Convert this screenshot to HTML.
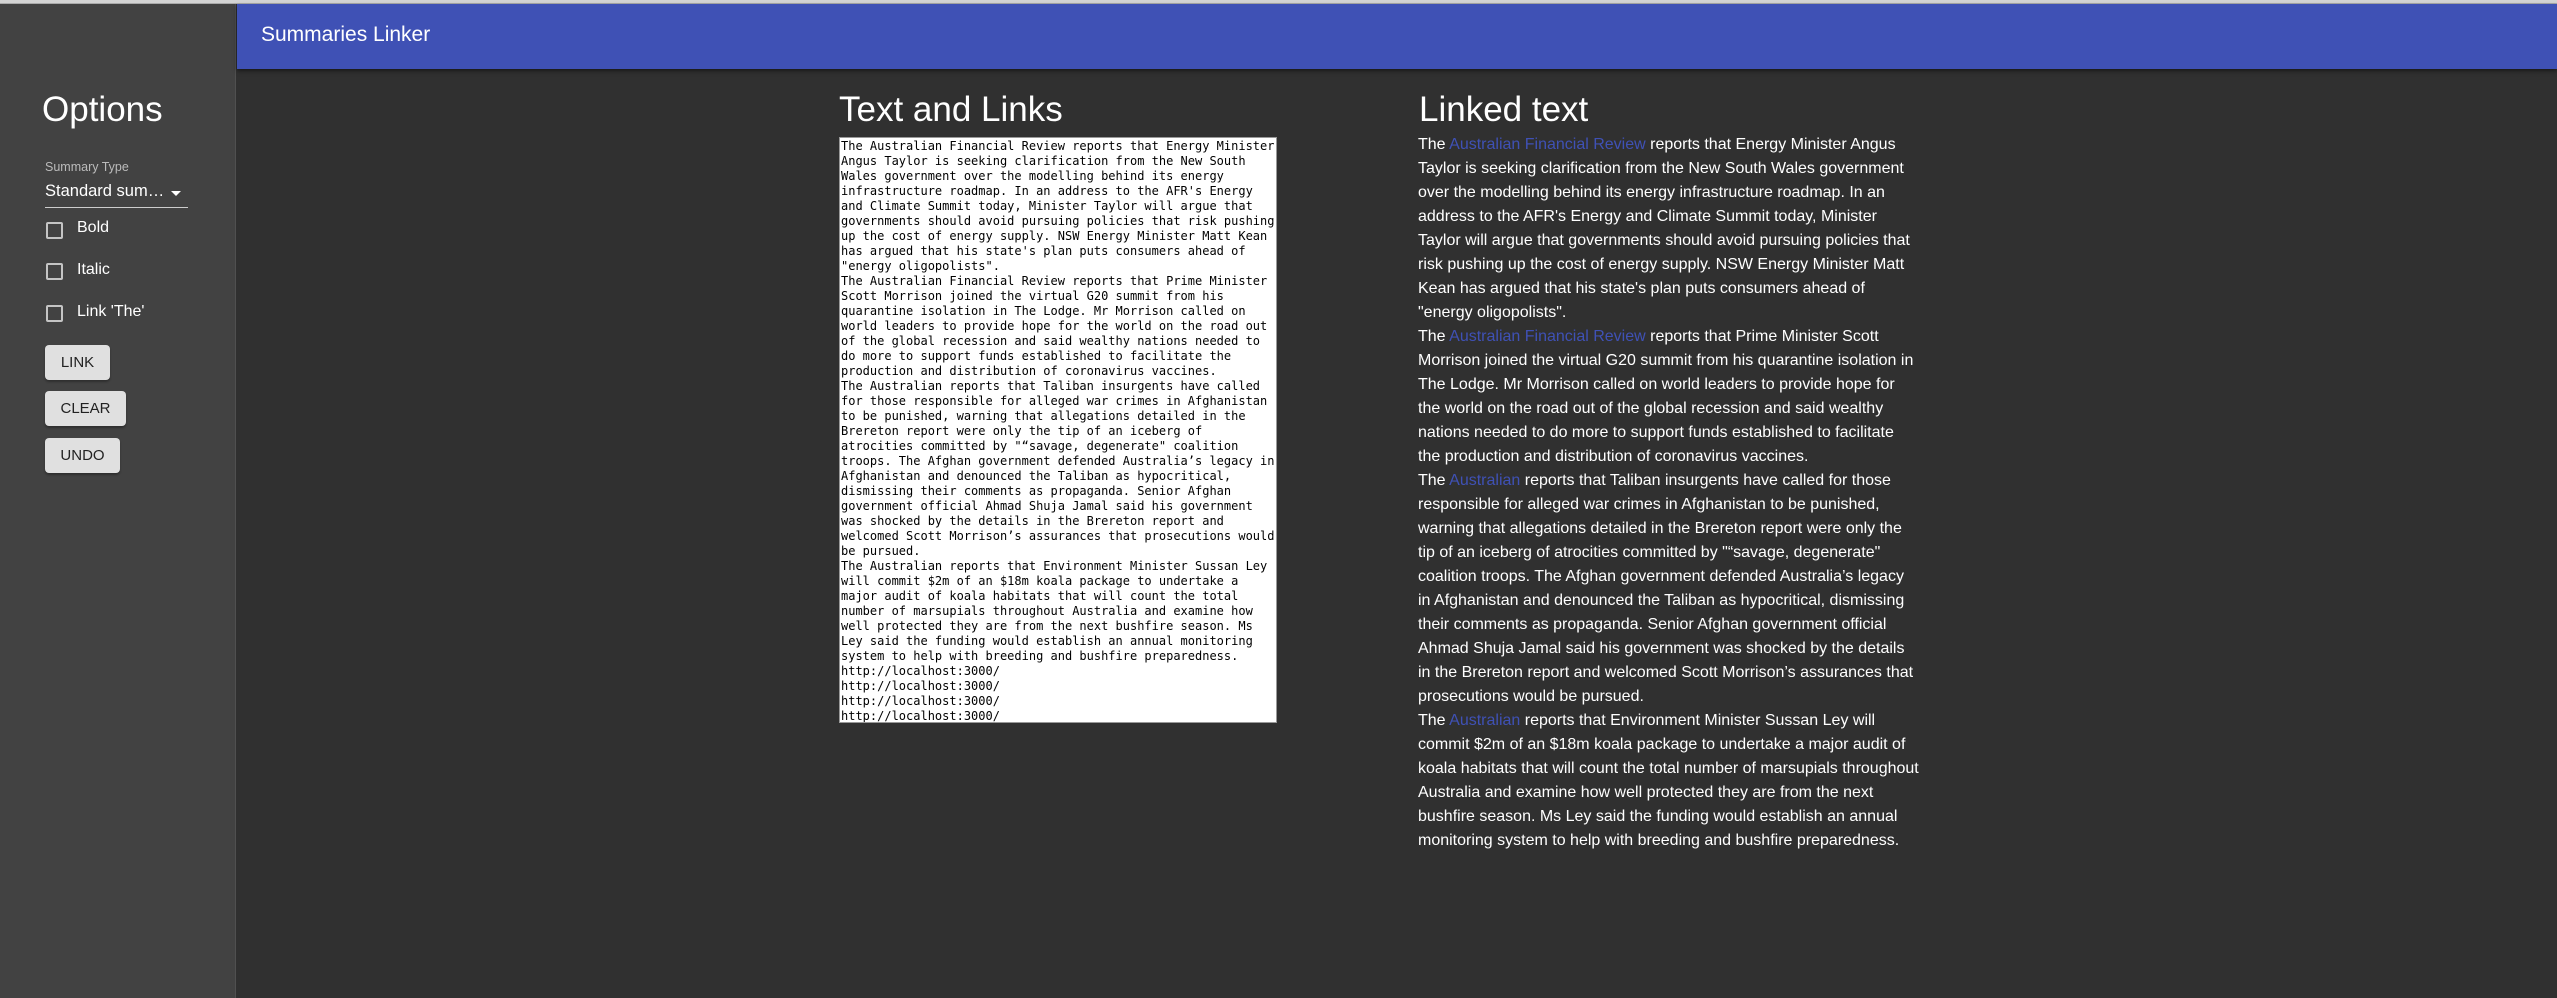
<!DOCTYPE html>
<html><head><meta charset="utf-8"><style>
*{margin:0;padding:0;box-sizing:border-box}
html,body{width:2557px;height:998px;overflow:hidden;background:#303030;font-family:"Liberation Sans",Arial,sans-serif;color:#fff}
.top{position:absolute;left:0;top:0;width:2557px;height:4px;background:#d4d4d4;border-bottom:1px solid #aaa}
.side{position:absolute;left:0;top:4px;width:236px;height:994px;background:#424242;border-right:1px solid #505050}
.hdr{position:absolute;left:237px;top:4px;width:2320px;height:65px;background:#3f51b5;box-shadow:0 2px 4px rgba(0,0,0,.5)}
.hdr span{position:absolute;left:24px;top:19px;font-size:21px;line-height:24px}
.abs{position:absolute;white-space:nowrap}
.h{font-size:35px;line-height:35px}
.cb{position:absolute;left:46px;width:17px;height:17px;border:2px solid #c4c4c4;border-radius:2px}
.lbl{position:absolute;left:77px;font-size:16px;line-height:18px;color:#fff}
.btn{position:absolute;left:45px;height:35px;background:#e0e0e0;color:#222;border-radius:4px;font-size:15px;line-height:35px;text-align:center;box-shadow:0 2px 2px rgba(0,0,0,.3)}
.ta{position:absolute;left:839px;top:137px;width:438px;height:586px;background:#fff;border:1px solid #999;color:#000;font-family:"DejaVu Sans Mono","Liberation Mono",monospace;font-size:12px;line-height:15px;padding:1px 1px;white-space:pre;overflow:hidden}
.lt{position:absolute;left:1418px;top:133px;width:520px;font-size:16px;line-height:24px;white-space:nowrap}
.lt a{color:#3f51b5;text-decoration:none}
</style></head><body>
<div class="top"></div>
<div class="side">
<div class="abs h" style="left:42px;top:88px">Options</div>
<div class="abs" style="left:45px;top:156px;font-size:12.5px;color:#bbb">Summary Type</div>
<div class="abs" style="left:45px;top:178px;font-size:16.5px">Standard sum…</div>
<div style="position:absolute;left:171px;top:187px;width:0;height:0;border-left:5px solid transparent;border-right:5px solid transparent;border-top:5px solid #fff"></div>
<div style="position:absolute;left:45px;top:203px;width:143px;height:1px;background:#ccc"></div>
<div class="cb" style="top:218px"></div><div class="lbl" style="top:215px">Bold</div>
<div class="cb" style="top:259px"></div><div class="lbl" style="top:257px">Italic</div>
<div class="cb" style="top:301px"></div><div class="lbl" style="top:299px">Link 'The'</div>
<div class="btn" style="top:341px;width:65px">LINK</div>
<div class="btn" style="top:387px;width:81px">CLEAR</div>
<div class="btn" style="top:434px;width:75px">UNDO</div>
</div>
<div class="hdr"><span>Summaries Linker</span></div>
<div class="abs h" style="left:839px;top:92px">Text and Links</div>
<div class="abs h" style="left:1419px;top:92px">Linked text</div>
<div class="ta">The Australian Financial Review reports that Energy Minister
Angus Taylor is seeking clarification from the New South
Wales government over the modelling behind its energy
infrastructure roadmap. In an address to the AFR's Energy
and Climate Summit today, Minister Taylor will argue that
governments should avoid pursuing policies that risk pushing
up the cost of energy supply. NSW Energy Minister Matt Kean
has argued that his state's plan puts consumers ahead of
"energy oligopolists".
The Australian Financial Review reports that Prime Minister
Scott Morrison joined the virtual G20 summit from his
quarantine isolation in The Lodge. Mr Morrison called on
world leaders to provide hope for the world on the road out
of the global recession and said wealthy nations needed to
do more to support funds established to facilitate the
production and distribution of coronavirus vaccines.
The Australian reports that Taliban insurgents have called
for those responsible for alleged war crimes in Afghanistan
to be punished, warning that allegations detailed in the
Brereton report were only the tip of an iceberg of
atrocities committed by "“savage, degenerate" coalition
troops. The Afghan government defended Australia’s legacy in
Afghanistan and denounced the Taliban as hypocritical,
dismissing their comments as propaganda. Senior Afghan
government official Ahmad Shuja Jamal said his government
was shocked by the details in the Brereton report and
welcomed Scott Morrison’s assurances that prosecutions would
be pursued.
The Australian reports that Environment Minister Sussan Ley
will commit $2m of an $18m koala package to undertake a
major audit of koala habitats that will count the total
number of marsupials throughout Australia and examine how
well protected they are from the next bushfire season. Ms
Ley said the funding would establish an annual monitoring
system to help with breeding and bushfire preparedness.
http://localhost:3000/
http://localhost:3000/
http://localhost:3000/
http://localhost:3000/</div>
<div class="lt">The <a>Australian Financial Review</a> reports that Energy Minister Angus<br>Taylor is seeking clarification from the New South Wales government<br>over the modelling behind its energy infrastructure roadmap. In an<br>address to the AFR's Energy and Climate Summit today, Minister<br>Taylor will argue that governments should avoid pursuing policies that<br>risk pushing up the cost of energy supply. NSW Energy Minister Matt<br>Kean has argued that his state's plan puts consumers ahead of<br>"energy oligopolists".<br>The <a>Australian Financial Review</a> reports that Prime Minister Scott<br>Morrison joined the virtual G20 summit from his quarantine isolation in<br>The Lodge. Mr Morrison called on world leaders to provide hope for<br>the world on the road out of the global recession and said wealthy<br>nations needed to do more to support funds established to facilitate<br>the production and distribution of coronavirus vaccines.<br>The <a>Australian</a> reports that Taliban insurgents have called for those<br>responsible for alleged war crimes in Afghanistan to be punished,<br>warning that allegations detailed in the Brereton report were only the<br>tip of an iceberg of atrocities committed by "“savage, degenerate"<br>coalition troops. The Afghan government defended Australia’s legacy<br>in Afghanistan and denounced the Taliban as hypocritical, dismissing<br>their comments as propaganda. Senior Afghan government official<br>Ahmad Shuja Jamal said his government was shocked by the details<br>in the Brereton report and welcomed Scott Morrison’s assurances that<br>prosecutions would be pursued.<br>The <a>Australian</a> reports that Environment Minister Sussan Ley will<br>commit $2m of an $18m koala package to undertake a major audit of<br>koala habitats that will count the total number of marsupials throughout<br>Australia and examine how well protected they are from the next<br>bushfire season. Ms Ley said the funding would establish an annual<br>monitoring system to help with breeding and bushfire preparedness.</div>
</body></html>
